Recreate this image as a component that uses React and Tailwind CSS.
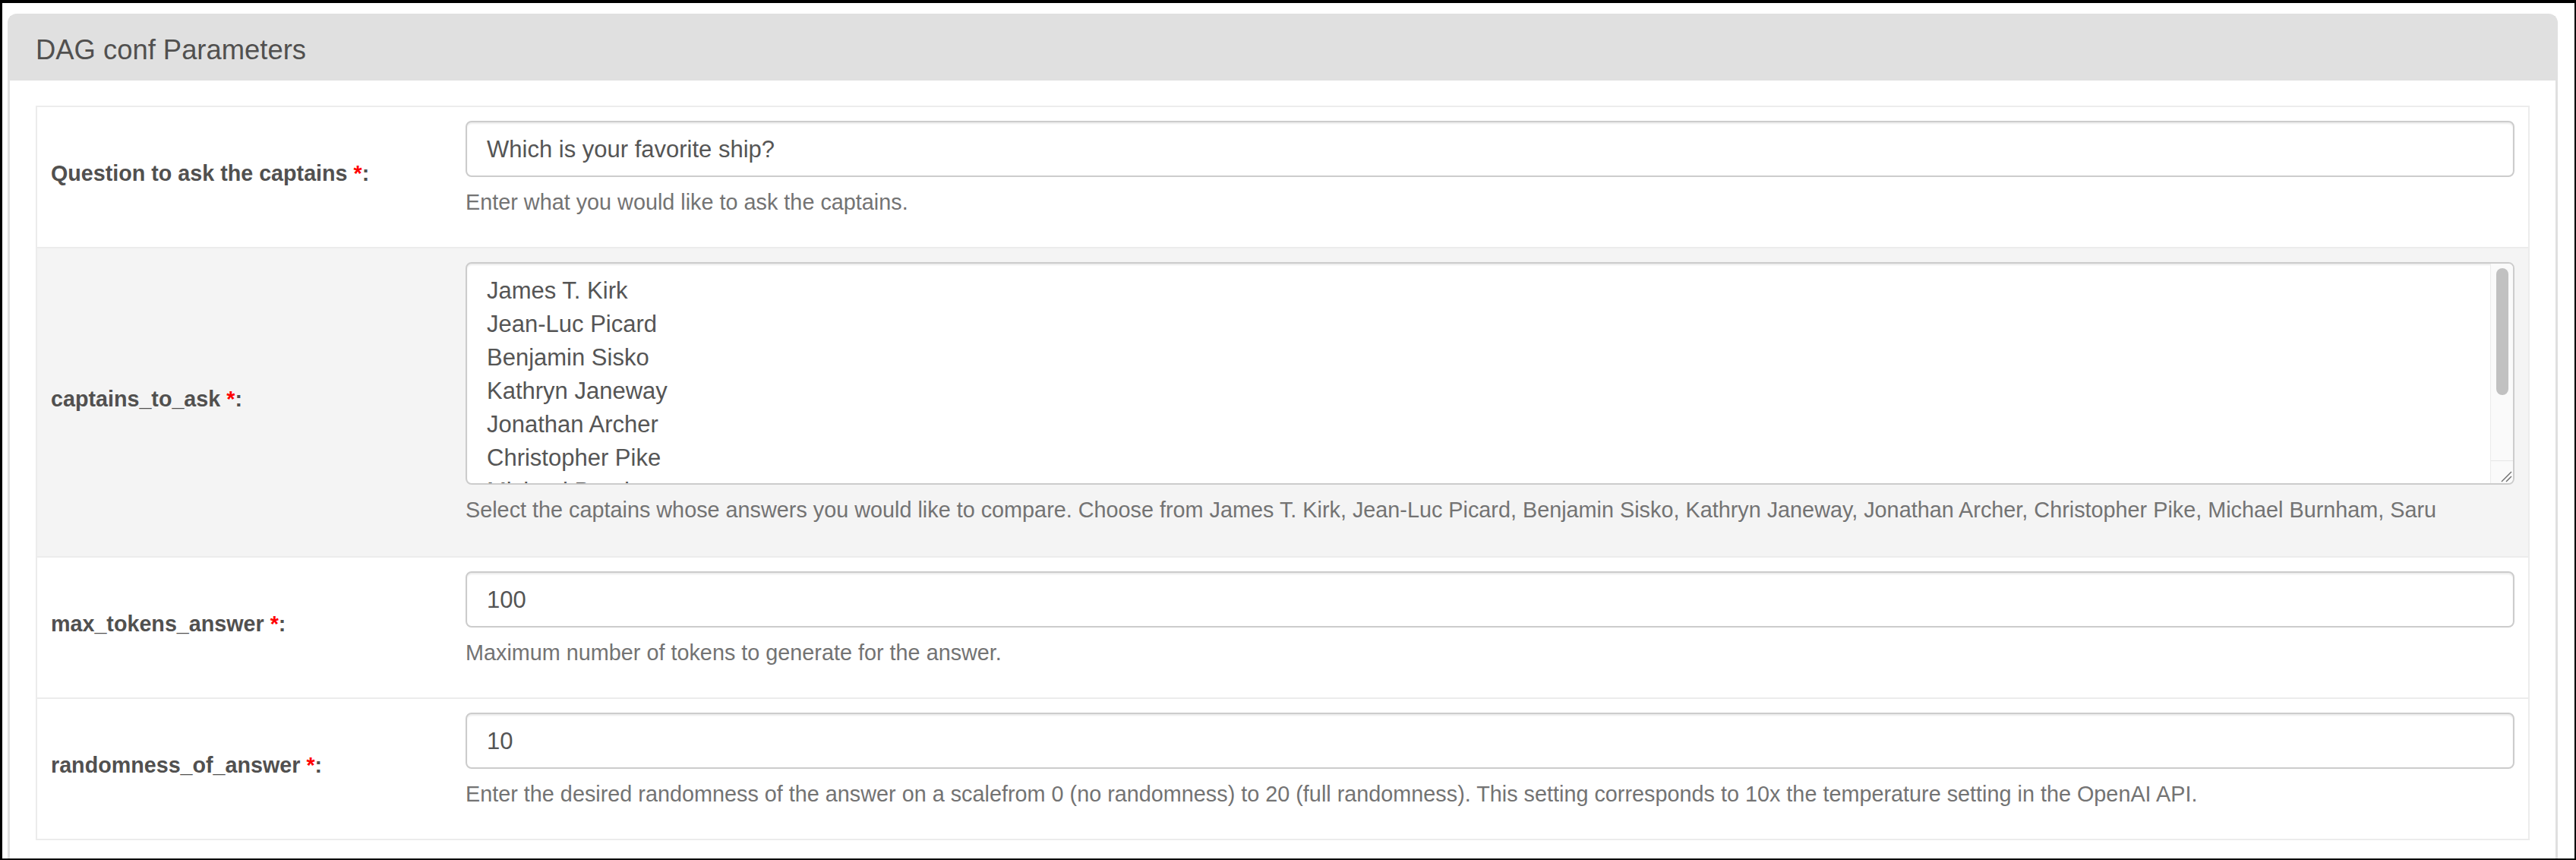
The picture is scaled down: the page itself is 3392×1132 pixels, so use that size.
import React from "react";

const captains = [
  "James T. Kirk",
  "Jean-Luc Picard",
  "Benjamin Sisko",
  "Kathryn Janeway",
  "Jonathan Archer",
  "Christopher Pike",
  "Michael Burnham",
  "Saru",
];

function Label({ text }) {
  return (
    <div className="w-[546px] shrink-0 flex items-center pl-[18px] pb-[8px]">
      <span className="text-[28.7px] font-bold text-[#51504f] whitespace-nowrap">
        {text} <span className="text-[#ff0000]">*</span>:
      </span>
    </div>
  );
}

function Help({ children }) {
  return (
    <div className="mt-[13px] text-[28.8px] leading-[40px] text-[#737373] whitespace-nowrap">
      {children}
    </div>
  );
}

function TextInput({ value }) {
  return (
    <div className="h-[74px] w-full bg-white border-2 border-[#cccccc] rounded-[8px] shadow-[inset_0_2px_2px_rgba(0,0,0,0.075)] pl-[26px] pt-[3px] flex items-center text-[31px] text-[#555555]">
      {value}
    </div>
  );
}

function TextArea() {
  return (
    <div className="h-[293px] w-full bg-white border-2 border-[#cccccc] rounded-[8px] shadow-[inset_0_2px_2px_rgba(0,0,0,0.075)] flex overflow-hidden">
      <div className="flex-1 overflow-hidden pl-[26px] pt-[14px] text-[31px] leading-[44px] text-[#555555]">
        {captains.map((c) => (
          <div key={c} className="whitespace-nowrap">
            {c}
          </div>
        ))}
      </div>
      <div className="w-[30px] shrink-0 flex flex-col border-l border-[#ececec] bg-[#fafafa]">
        <div className="ml-[7px] mt-[6px] w-[16px] h-[167px] rounded-full bg-[#c1c1c1]" />
        <div className="flex-1" />
        <div className="h-[30px] border-t border-[#e6e6e6] flex items-end justify-end pr-[1px] pb-[1px]">
          <svg width="16" height="16" viewBox="0 0 16 16">
            <line x1="2" y1="15" x2="15" y2="2" stroke="#6e6e6e" strokeWidth="1.3" />
            <line x1="8" y1="15" x2="15" y2="8" stroke="#6e6e6e" strokeWidth="1.3" />
          </svg>
        </div>
      </div>
    </div>
  );
}

export default function App() {
  return (
    <div
      className="w-[3392px] h-[1132px] overflow-hidden bg-white border-black border-l-[3px] border-t-[4px] border-r-[2px] border-b-[2px]"
      style={{ fontFamily: '"Liberation Sans", Arial, Helvetica, sans-serif' }}
    >
      <div className="ml-[7px] mr-[22px] mt-[14px] rounded-t-[12px] border-[3px] border-[#e0e0e0]">
        <div className="h-[85px] bg-[#e0e0e0] flex items-center pl-[34px] pt-[6px]">
          <span className="text-[36.4px] text-[#51504f] whitespace-nowrap">DAG conf Parameters</span>
        </div>
        <div className="px-[34px] pt-[33px] pb-[60px] bg-white">
          <div className="border-2 border-[#ececec]">
            <div className="flex bg-white">
              <Label text="Question to ask the captains" />
              <div className="flex-1 px-[18px] pt-[18px] pb-[39px]">
                <TextInput value="Which is your favorite ship?" />
                <Help>Enter what you would like to ask the captains.</Help>
              </div>
            </div>
            <div className="flex bg-[#f4f4f4] border-t-2 border-[#ececec]">
              <Label text="captains_to_ask" />
              <div className="flex-1 px-[18px] pt-[18px] pb-[41px]">
                <TextArea />
                <Help>
                  Select the captains whose answers you would like to compare. Choose from James T. Kirk, Jean-Luc Picard, Benjamin Sisko, Kathryn Janeway, Jonathan Archer, Christopher Pike, Michael Burnham, Saru
                </Help>
              </div>
            </div>
            <div className="flex bg-white border-t-2 border-[#ececec]">
              <Label text="max_tokens_answer" />
              <div className="flex-1 px-[18px] pt-[18px] pb-[39px]">
                <TextInput value="100" />
                <Help>Maximum number of tokens to generate for the answer.</Help>
              </div>
            </div>
            <div className="flex bg-white border-t-2 border-[#ececec]">
              <Label text="randomness_of_answer" />
              <div className="flex-1 px-[18px] pt-[18px] pb-[39px]">
                <TextInput value="10" />
                <Help>
                  Enter the desired randomness of the answer on a scalefrom 0 (no randomness) to 20 (full randomness). This setting corresponds to 10x the temperature setting in the OpenAI API.
                </Help>
              </div>
            </div>
          </div>
        </div>
      </div>
    </div>
  );
}
